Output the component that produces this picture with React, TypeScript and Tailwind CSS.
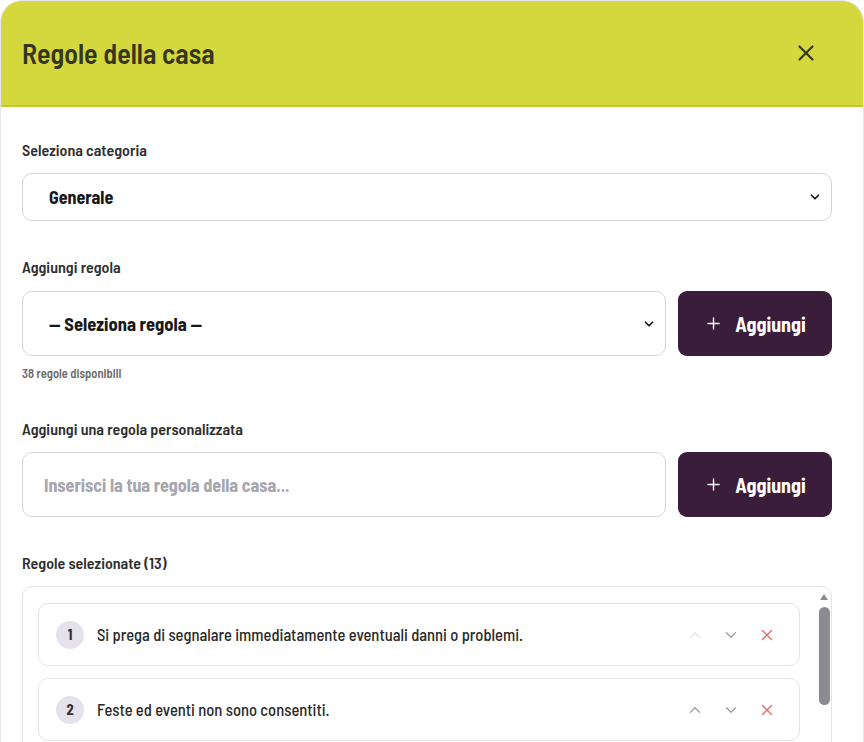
import { ChevronDown, ChevronUp, Plus, X } from 'lucide-react';

const rules = [
    'Si prega di segnalare immediatamente eventuali danni o problemi.',
    'Feste ed eventi non sono consentiti.',
];

export default function App() {
    return (
        <div className="min-h-screen bg-white font-['Barlow_Semi_Condensed','Liberation_Sans_Narrow','DejaVu_Sans_Condensed',sans-serif]">
            <div className="h-[742px] overflow-hidden rounded-t-[22px] border-x border-t border-gray-200 bg-white">
                {/* Header */}
                <div className="flex h-[106px] items-center justify-between border-b-2 border-[#c3c92c] bg-[#d3d83d] pl-[21px] pr-[44px]">
                    <h1 className="text-[28px] font-semibold text-[#36361f]">Regole della casa</h1>
                    <X size={26} strokeWidth={2} className="text-[#36361f]" />
                </div>

                {/* Body */}
                <div className="pl-[21px] pr-[31px] pt-[33px]">
                    <label className="mb-[13px] block text-[16px] font-semibold leading-5 text-[#2f2f2f]">Seleziona categoria</label>
                    <div className="flex h-12 items-center justify-between rounded-[10px] border border-[#d4d4d8] pl-[26px] pr-[9px]">
                        <span className="text-[18px] font-bold text-[#18181b]">Generale</span>
                        <ChevronDown size={14} strokeWidth={3} className="text-[#18181b]" />
                    </div>

                    <label className="mb-[14px] mt-[36px] block text-[16px] font-semibold leading-5 text-[#2f2f2f]">Aggiungi regola</label>
                    <div className="flex gap-3">
                        <div className="flex h-[65px] flex-1 items-center justify-between rounded-[10px] border border-[#d4d4d8] pl-[26px] pr-[9px]">
                            <span className="text-[18.5px] font-bold text-[#18181b]">— Seleziona regola —</span>
                            <ChevronDown size={14} strokeWidth={3} className="text-[#18181b]" />
                        </div>
                        <button className="flex h-[65px] w-[154px] items-center justify-center gap-3 rounded-[9px] bg-[#3a1d3b] text-[20px] font-bold text-white">
                            <Plus size={19} strokeWidth={1.75} />
                            Aggiungi
                        </button>
                    </div>
                    <p className="mt-[9px] text-[12.5px] font-semibold leading-4 text-[#6b6b6b]">38 regole disponibili</p>

                    <label className="mb-[13px] mt-[38px] block text-[16px] font-semibold leading-5 text-[#2f2f2f]">Aggiungi una regola personalizzata</label>
                    <div className="flex gap-3">
                        <input
                            type="text"
                            placeholder="Inserisci la tua regola della casa..."
                            className="h-[65px] flex-1 rounded-[10px] border border-[#d4d4d8] pl-[21px] text-[18px] font-bold text-[#18181b] placeholder:text-[#a6a6ad] focus:outline-none"
                        />
                        <button className="flex h-[65px] w-[154px] items-center justify-center gap-3 rounded-[9px] bg-[#3a1d3b] text-[20px] font-bold text-white">
                            <Plus size={19} strokeWidth={1.75} />
                            Aggiungi
                        </button>
                    </div>

                    <label className="mb-[13px] mt-[36px] block text-[16px] font-semibold leading-5 text-[#2f2f2f]">Regole selezionate (13)</label>
                    <div className="flex h-[300px] rounded-[10px] border border-[#e4e4e7] pl-[15px] pt-4">
                        <div className="flex flex-1 flex-col gap-3">
                            {rules.map((rule, i) => (
                                <div key={i} className="flex h-[63px] items-center rounded-[10px] border border-[#e4e4e7] pl-[17px] pr-[23px]">
                                    <span className="flex h-7 w-7 items-center justify-center rounded-full bg-[#e5e2eb] text-[14.5px] font-bold text-[#2f2f2f]">{i + 1}</span>
                                    <span className="ml-[13px] flex-1 text-[16.5px] font-medium text-[#2a2a2a]">{rule}</span>
                                    <div className="flex items-center gap-[18px]">
                                        <ChevronUp size={18} strokeWidth={1.75} className={i === 0 ? 'text-[#e4e4e7]' : 'text-[#9c9ca3]'} />
                                        <ChevronDown size={18} strokeWidth={1.75} className="text-[#9c9ca3]" />
                                        <X size={18} strokeWidth={2} className="text-[#e07474]" />
                                    </div>
                                </div>
                            ))}
                        </div>
                        {/* Scrollbar */}
                        <div className="ml-[18px] mr-px flex w-[12px] flex-col items-center">
                            <svg width="10" height="8" viewBox="0 0 10 8" className="-mt-[10px]">
                                <path d="M5 1 L9 7 L1 7 Z" fill="#8a8a90" />
                            </svg>
                            <div className="mt-[6px] h-[98px] w-[11px] rounded-full bg-[#8a8a90]" />
                        </div>
                    </div>
                </div>
            </div>
        </div>
    );
}
